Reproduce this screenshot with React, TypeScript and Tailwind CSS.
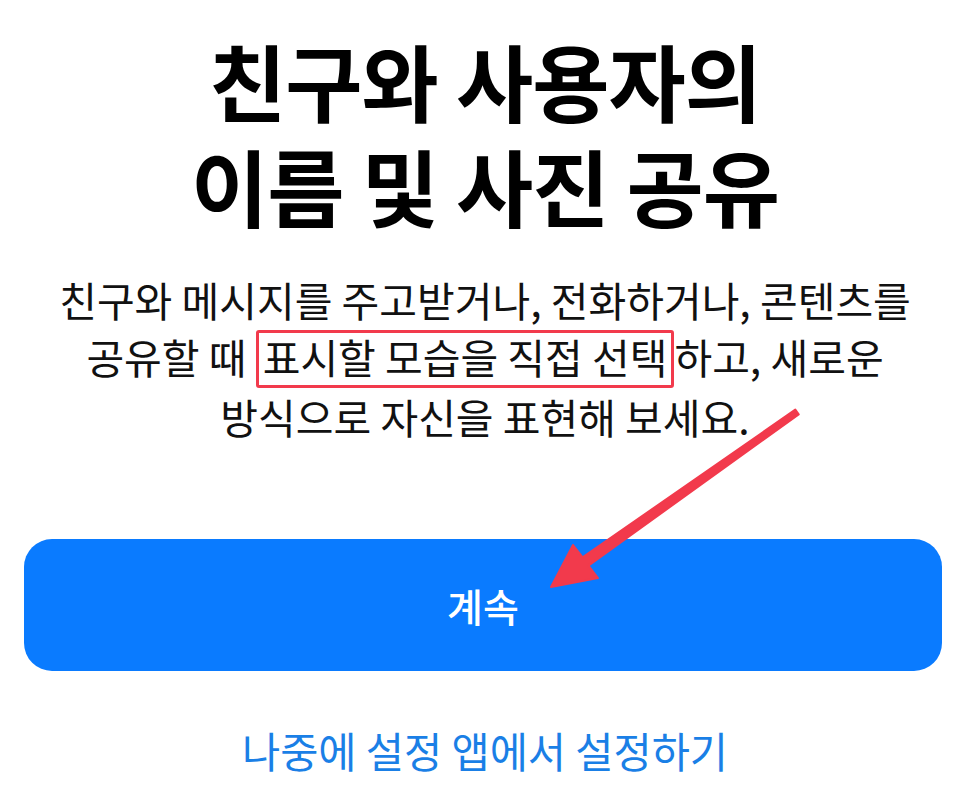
import React from "react";

const font = { fontFamily: '"Noto Sans CJK KR", "Noto Sans", sans-serif' };

function Arrow() {
  return (
    <svg
      className="pointer-events-none absolute left-0 top-0"
      width="970"
      height="790"
      viewBox="0 0 970 790"
    >
      <polygon
        points="795.3,409.6 798.7,414.4 588.4,565.6 598,578 551,587 573,545 582.6,557.4"
        fill="#f23a4c"
        stroke="#f23a4c"
        strokeWidth="2"
        strokeLinejoin="round"
      />
    </svg>
  );
}

export default function App() {
  return (
    <main
      className="relative h-[790px] w-[970px] overflow-hidden bg-white text-black"
      style={font}
    >
      <div className="flex flex-col items-center pt-[27px]">
        <h1 className="text-center text-[84px] font-bold leading-[105px] tracking-[-1px]">
          친구와 사용자의
          <br />
          이름 및 사진 공유
        </h1>

        <p className="mt-[34px] text-center text-[41px] leading-[57px] text-[#111]">
          친구와 메시지를 주고받거나, 전화하거나, 콘텐츠를
          <br />
          공유할 때{" "}
          <span className="inline-block rounded-[3px] border-[3px] border-[#f23a4c] px-[4px] pb-[5px] leading-[47px]">
            표시할 모습을 직접 선택
          </span>
          하고, 새로운
          <br />
          방식으로 자신을 표현해 보세요.
        </p>
      </div>

      <div className="mt-[94px] px-[24px]">
        <button
          type="button"
          className="flex h-[132px] w-[918px] items-center justify-center rounded-[28px] bg-[#0a7bff] text-[39px] font-medium text-white"
        >
          계속
        </button>

        <div className="mt-[48px] text-center text-[41.5px] text-[#1a7fe6]">
          나중에 설정 앱에서 설정하기
        </div>
      </div>

      <Arrow />
    </main>
  );
}
